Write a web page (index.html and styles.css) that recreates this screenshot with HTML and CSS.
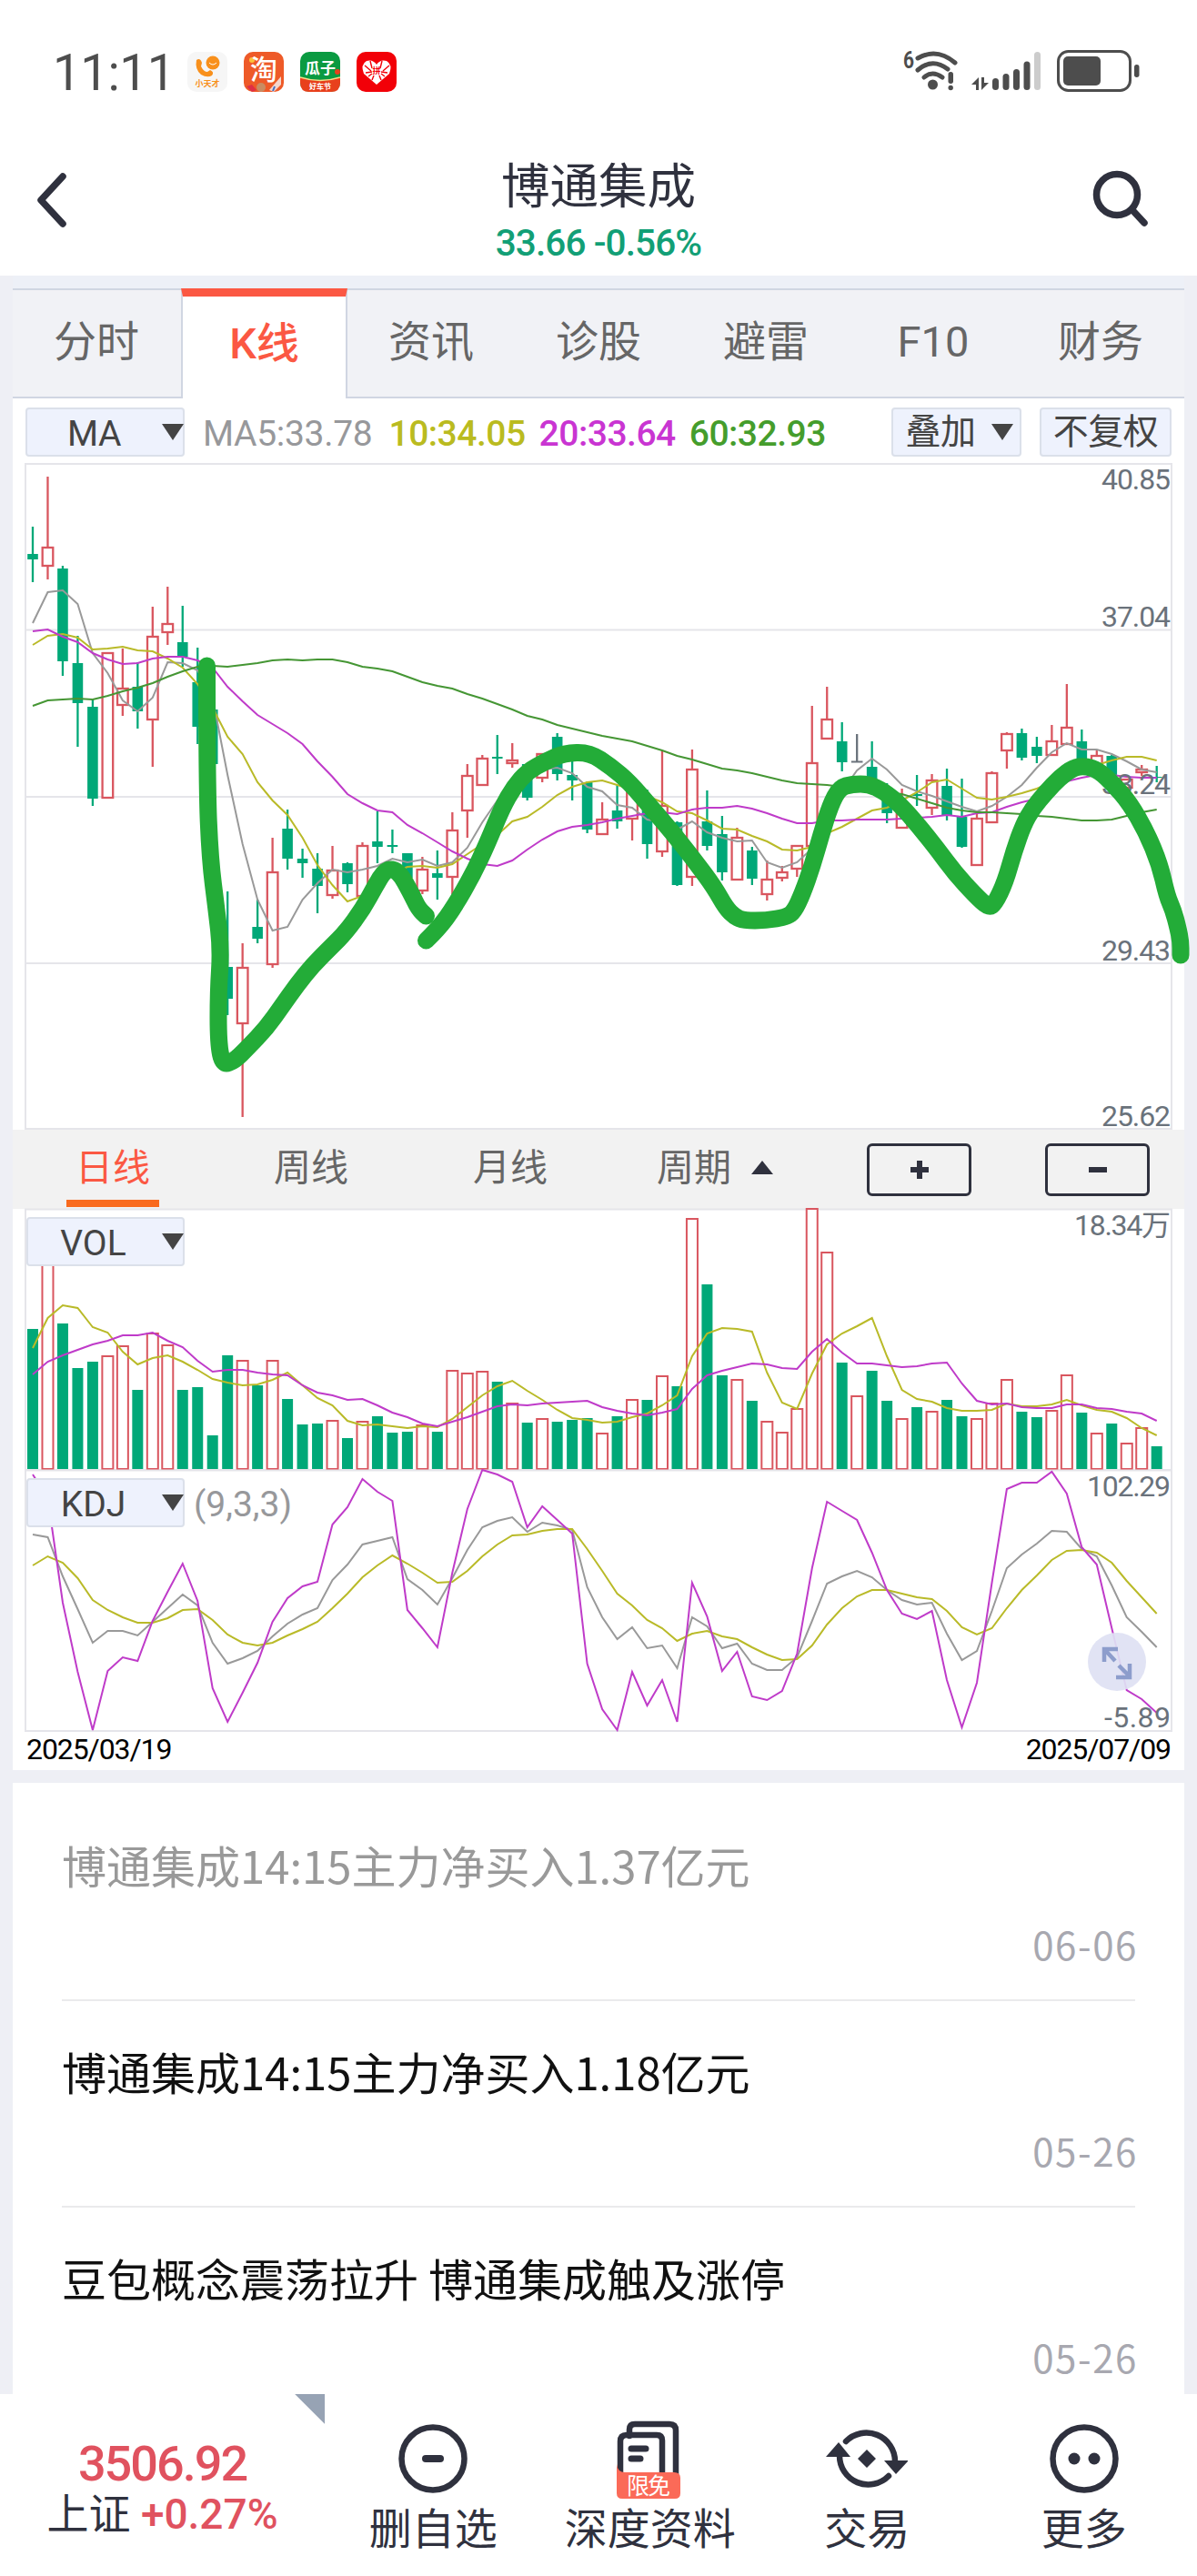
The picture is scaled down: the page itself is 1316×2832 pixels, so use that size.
FILE: index.html
```html
<!DOCTYPE html>
<html lang="zh-CN">

<head>
  <meta charset="UTF-8" />
  <meta name="viewport" content="width=device-width, initial-scale=1.0" />
  <link rel="stylesheet" href="styles.css">
  <title>博通集成</title>
</head>

<body>
  <!-- 状态栏 -->
  <div class="status">
    <span class="time">11:11</span>
    <div class="apps">
      <svg class="app" viewBox="0 0 44 44">
        <rect width="44" height="44" rx="10" fill="#f6f6f6" />
        <path d="M10 9q4-3 6 3l-1 4q3 6 7 6l3-2q5 2 2 6-5 3-12-1-7-6-5-16z" fill="#f8901c" />
        <circle cx="28" cy="12" r="7.500" fill="#f8901c" />
        <path d="M24 12q4 4 8 0" fill="none" stroke="#fff" stroke-width="1" />
        <text x="22" y="38" font-size="9" fill="#f8901c" text-anchor="middle" font-weight="700">小天才</text>
      </svg>
      <svg class="app" viewBox="0 0 44 44">
        <rect width="44" height="44" rx="10" fill="#ee5a28" />
        <circle cx="9" cy="9" r="3" fill="#fdc13a" />
        <text x="22" y="30" font-size="30" fill="#fff" text-anchor="middle" font-weight="500">淘</text>
        <path d="M3 38l6-2 5 6-5 2z" fill="#e02f45" />
        <circle cx="19" cy="39" r="5" fill="#c98b62" />
        <path d="M28 42l13-15v9l-8 8z" fill="#f4d6cc" />
        <path d="M32 43l2-5" stroke="#3f6fc4" stroke-width="2" />
      </svg>
      <svg class="app" viewBox="0 0 44 44">
        <rect width="44" height="44" rx="10" fill="#0a9a41" />
        <path d="M0 28q22 7 44 0v6q0 10-10 10H10Q0 44 0 34z" fill="#e8401c" />
        <path d="M0 28q22 7 44 0" fill="none" stroke="#f5e08a" stroke-width="1.500" />
        <circle cx="41" cy="22" r="3" fill="#e8401c" />
        <text x="22" y="24" font-size="17" fill="#fff" text-anchor="middle" font-weight="700">瓜子</text>
        <text x="22" y="41" font-size="8" fill="#fff" text-anchor="middle" font-weight="700">好车节</text>
      </svg>
      <svg class="app" viewBox="0 0 44 44">
        <rect width="44" height="44" rx="10" fill="#f20008" />
        <path d="M22 36L8 24Q4 14 11 10q7-2 11 4 4-6 11-4 7 4 3 14z" fill="#fff" />
        <path d="M9 15l7 6M15 10l2 8M28 10l-2 8M36 15l-7 6M10 23l7-1M34 23l-7-1M17 31l2-5M27 31l-2-5M13 27l4-3M31 27l-4-3" stroke="#f20008" stroke-width="1.400" />
        <text x="22" y="24" font-size="9" fill="#f20008" text-anchor="middle" font-weight="700">拼</text>
      </svg>
    </div>
    <svg class="signals" viewBox="990 50 270 56">
      <text x="993" y="75" font-size="25" textLength="12" lengthAdjust="spacingAndGlyphs" font-weight="700" fill="#4d4d4d">6</text>
      <g fill="none" stroke="#4d4d4d" stroke-width="5">
        <path d="M1009 64Q1030 52 1050 69" stroke-linecap="round" />
        <path d="M1009 77Q1025 63 1042 76" stroke-linecap="round" />
        <path d="M1016 85Q1025 77 1036 85" stroke-linecap="round" />
      </g>
      <circle cx="1025.500" cy="93" r="5.500" fill="#4d4d4d" />
      <rect x="1042.500" y="79" width="5.500" height="13" rx="2.700" fill="#4d4d4d" />
      <circle cx="1045.200" cy="96.500" r="2.700" fill="#4d4d4d" />
      <path d="M1076 99V85l-8 8h5v6zM1079 85v14l8-8h-5v-6z" fill="#4d4d4d" />
      <g fill="#4d4d4d">
        <rect x="1091" y="86" width="7" height="13" rx="3.500" />
        <rect x="1102.500" y="81" width="7" height="18" rx="3.500" />
        <rect x="1114" y="76" width="7" height="23" rx="3.500" />
        <rect x="1125.500" y="67.500" width="7" height="31.500" rx="3.500" />
        <rect x="1137" y="57" width="7" height="42" rx="3.500" fill="#ccc" />
        <rect x="1169" y="62" width="41" height="32" rx="5" />
        <rect x="1247" y="71" width="5.500" height="14" rx="2.700" />
      </g>
      <rect x="1163.500" y="56.500" width="79" height="43" rx="11" fill="none" stroke="#4d4d4d" stroke-width="3" />
    </svg>
  </div>

  <!-- 标题栏 -->
  <header class="header">
    <svg class="back" viewBox="0 0 40 66"><path d="M32 7L8 33l24 26" /></svg>
    <div class="stock">
      <h1>博通集成</h1>
      <p>33.66 -0.56%</p>
    </div>
    <svg class="search" viewBox="0 0 66 66"><circle cx="28" cy="27" r="22.500" /><path d="M45 44l13 14" /></svg>
  </header>

  <main class="panel">
    <nav class="tabs">
      <a>分时</a>
      <a class="active">K线</a>
      <a>资讯</a>
      <a>诊股</a>
      <a>避雷</a>
      <a>F10</a>
      <a>财务</a>
    </nav>

    <div class="legend">
      <div class="select">MA<i class="down"></i></div>
      <span class="ma5">MA5:33.78</span>
      <span class="ma10">10:34.05</span>
      <span class="ma20">20:33.64</span>
      <span class="ma60">60:32.93</span>
      <div class="select overlap">叠加<i class="down"></i></div>
      <div class="select right">不复权</div>
    </div>

    <svg class="chart kline" viewBox="0 502 1288 740">
      <path class="grid" d="M14 510H1274V1241H14zM14 692.500H1274M14 876H1274M14 1059H1274" />
      <g id="candles"></g>
      <g class="axis">
        <text x="1273" y="538" textLength="76">40.85</text>
        <text x="1273" y="689" textLength="76">37.04</text>
        <text x="1273" y="872.500" textLength="76">33.24</text>
        <text x="1273" y="1055.500" textLength="76">29.43</text>
        <text x="1273" y="1238" textLength="76">25.62</text>
      </g>
      <!-- 手绘走势 -->
      <g class="brush" id="brush"></g>
    </svg>

    <div class="periods">
      <a class="active">日线</a>
      <a>周线</a>
      <a>月线</a>
      <a>周期<i class="up"></i></a>
      <button><svg viewBox="0 0 24 24"><path d="M2 12h20M12 2v20" /></svg></button>
      <button><svg viewBox="0 0 24 24"><path d="M2 12h20" /></svg></button>
    </div>

    <div class="indicator">
      <svg class="chart" viewBox="0 1329 1288 287">
        <path class="grid" d="M14 1616V1329.500H1274V1616z" />
        <g id="volume"></g>
        <g class="axis"><text x="1273" y="1358" textLength="106">18.34万</text></g>
      </svg>
      <div class="select">VOL<i class="down"></i></div>
    </div>

    <div class="indicator">
      <svg class="chart" viewBox="0 1616 1288 288">
        <path class="grid" d="M14 1616.500H1274V1903H14z" />
        <g id="kdj"></g>
        <g class="axis">
          <text x="1273" y="1645" textLength="92">102.29</text>
          <text x="1273" y="1899" textLength="73">-5.89</text>
        </g>
      </svg>
      <div class="select">KDJ<i class="down"></i></div>
      <span class="params">(9,3,3)</span>
      <svg class="expand" viewBox="0 0 64 64">
        <circle cx="32" cy="32" r="32" />
        <path d="M18 32V18H33M18 18L30 31M46 34V49H31M46 48L34 36" />
      </svg>
    </div>

    <div class="dates"><span>2025/03/19</span><span>2025/07/09</span></div>
  </main>

  <section class="news">
    <article class="read">
      <h2>博通集成14:15主力净买入1.37亿元</h2>
      <time>06-06</time>
    </article>
    <article>
      <h2>博通集成14:15主力净买入1.18亿元</h2>
      <time>05-26</time>
    </article>
    <article>
      <h2>豆包概念震荡拉升 博通集成触及涨停</h2>
      <time>05-26</time>
    </article>
  </section>

  <footer class="toolbar">
    <div class="index">
      <strong>3506.92</strong>
      <p>上证 <em>+0.27%</em></p>
    </div>
    <a>
      <svg viewBox="0 0 90 90"><circle cx="45" cy="45" r="34.500" /><path d="M37 45h16" stroke-width="8" /></svg>
      删自选
    </a>
    <a>
      <svg viewBox="0 0 90 90">
        <path d="M22 20V13q0-6 6-6H66q7 0 7 7V62" />
        <path d="M12 62V26q0-7 7-7H52q6 0 6 6V62" />
        <path d="M24 34H40M24 45H34" stroke-width="7" />
        <path class="tag" d="M8 51q1 9 9 9H71q7 0 7 6V83q0 6-6 6H14q-6 0-6-6z" />
        <text x="43" y="84" textLength="48">限免</text>
      </svg>
      深度资料
    </a>
    <a>
      <svg viewBox="0 0 90 90">
        <path d="M22 26A31.500 31.500 0 0 1 76 48M69 64A31.500 31.500 0 0 1 15 42" />
        <path class="fill" d="M0 43L14 27 27 43zM64 47H91L77 62zM45 35l10 10-10 10-10-10z" />
      </svg>
      交易
    </a>
    <a>
      <svg viewBox="0 0 90 90"><circle cx="45" cy="45" r="34.500" /><circle class="fill" cx="34" cy="45" r="6.500" /><circle class="fill" cx="56" cy="45" r="6.500" /></svg>
      更多
    </a>
  </footer>

  <script>
    const STEP = 16.476
    const xAt = i => 22 + i * STEP

    // 每根K线: 颜色, 最高, 实体上沿, 实体下沿, 最低
    const candles = [
      'g 579 609 615 640', 'r 524 602 622 637', 'g 622 625 727 743', 'g 699 729 773 821', 'g 768 777 878 886',
      'r 718 718 877 877', 'r 713 757 775 787', 'g 728 755 782 801', 'r 667 700 791 843', 'r 645 686 695 709',
      'g 666 706 722 733', 'g 712 750 799 818', 'g 760 780 840 850', 'g 980 1063 1098 1116', 'r 1037 1064 1125 1228',
      'g 989 1019 1032 1037', 'r 921 959 1060 1064', 'g 890 911 944 956', 'g 933 944 949 965', 'g 938 955 974 1004',
      'r 930 957 984 988', 'g 948 949 972 981', 'r 926 930 985 985', 'g 892 925 931 949', 'g 912 929 931 938',
      'g 938 938 965 970', 'r 942 956 979 983', 'g 935 960 965 989', 'r 893 913 964 983', 'r 840 853 891 921',
      'r 830 834 863 863', 'g 808 832 834 851', 'r 817 836 839 844', 'g 839 840 877 880', 'r 829 829 855 860',
      'g 806 810 851 858', 'g 833 852 858 880', 'g 859 860 912 916', 'r 882 901 917 918', 'g 863 891 903 911',
      'r 866 868 900 924', 'g 868 887 928 944', 'r 825 886 936 942', 'g 903 904 973 974', 'r 824 846 964 974',
      'g 869 903 930 935', 'g 897 917 959 968', 'r 910 921 967 967', 'g 931 935 966 973', 'r 946 967 983 990',
      'r 952 959 965 969', 'r 929 930 955 964', 'r 776 839 930 930', 'r 755 791 812 812', 'g 794 815 838 848',
      'f 807 837 838 838', 'g 815 843 860 865', 'g 861 877 894 905', 'r 867 887 910 910', 'g 852 873 875 886',
      'r 851 858 888 896', 'g 845 864 896 902', 'g 856 898 931 932', 'r 894 900 951 951', 'r 848 850 904 904',
      'r 805 807 825 845', 'g 801 806 833 836', 'g 810 821 831 839', 'r 797 815 830 830', 'r 752 800 818 818',
      'g 802 815 840 842', 'r 825 831 843 843', 'g 830 831 857 857', 'r 857 857 866 866', 'r 841 846 849 853',
      'g 842 854 855 860'
    ].map(row => row.split(' ').map((v, i) => i ? +v : v))

    const volumes = [154, 268, 160, 111, 118, 124, 135, 87, 149, 136, 87, 90, 37, 125, 119, 92, 119, 77, 49, 50, 53, 34, 52, 58, 40, 41, 48, 41, 108, 105, 107, 96, 72, 51, 55, 52, 54, 56, 39, 58, 76, 76, 102, 91, 275, 203, 103, 98, 75, 52, 40, 66, 286, 238, 117, 80, 108, 75, 55, 68, 63, 76, 58, 55, 72, 98, 63, 57, 64, 103, 62, 39, 50, 28, 45, 25]

    const ma = {
      ma5: [685, 651, 649, 664, 718, 740, 770, 782, 767, 728, 729, 737, 767, 852, 928, 989, 1023, 1019, 989, 971, 956, 959, 956, 952, 944, 948, 945, 952, 948, 932, 904, 880, 860, 850, 846, 844, 850, 865, 870, 885, 888, 901, 904, 912, 903, 915, 921, 925, 924, 948, 954, 948, 933, 900, 870, 847, 834, 846, 863, 870, 875, 881, 887, 892, 886, 876, 863, 844, 827, 817, 824, 824, 829, 837, 846, 849],
      ma10: [709, 699, 697, 701, 714, 713, 711, 715, 716, 724, 734, 752, 778, 810, 829, 860, 880, 896, 921, 951, 973, 991, 985, 970, 960, 953, 952, 954, 950, 939, 928, 918, 903, 898, 887, 874, 865, 860, 858, 863, 868, 875, 882, 892, 894, 902, 911, 912, 919, 925, 934, 935, 931, 916, 909, 900, 891, 888, 880, 871, 860, 857, 867, 877, 879, 876, 872, 867, 860, 854, 847, 841, 836, 832, 832, 836],
      ma20: [694, 692, 700, 706, 718, 725, 730, 729, 724, 722, 722, 726, 734, 755, 771, 786, 796, 806, 818, 837, 854, 873, 883, 891, 893, 907, 916, 926, 936, 944, 950, 952, 946, 934, 923, 914, 909, 907, 904, 900, 897, 894, 893, 895, 890, 888, 888, 886, 889, 894, 900, 905, 905, 902, 902, 901, 901, 901, 900, 899, 898, 896, 898, 894, 893, 887, 882, 878, 868, 859, 855, 852, 852, 854, 855, 855],
      ma60: [776, 770, 769, 768, 769, 765, 760, 756, 751, 744, 738, 733, 732, 733, 731, 729, 726, 725, 726, 725, 725, 728, 733, 735, 738, 744, 750, 754, 757, 763, 768, 774, 780, 787, 791, 797, 801, 805, 809, 812, 815, 820, 825, 831, 835, 840, 845, 847, 850, 854, 858, 861, 862, 863, 865, 867, 868, 871, 873, 878, 883, 888, 891, 893, 893, 894, 895, 897, 898, 900, 902, 902, 901, 897, 893, 890]
    }

    const volMa = {
      ma10: [1482, 1449, 1435, 1438, 1459, 1465, 1486, 1500, 1493, 1490, 1497, 1506, 1516, 1520, 1523, 1522, 1517, 1509, 1523, 1537, 1545, 1562, 1567, 1566, 1568, 1570, 1568, 1569, 1560, 1547, 1534, 1524, 1518, 1529, 1539, 1550, 1559, 1561, 1564, 1563, 1558, 1554, 1545, 1534, 1491, 1466, 1460, 1461, 1464, 1509, 1542, 1549, 1510, 1478, 1466, 1458, 1449, 1491, 1528, 1538, 1541, 1548, 1551, 1551, 1550, 1543, 1546, 1546, 1544, 1539, 1545, 1550, 1552, 1559, 1570, 1578],
      ma20: [1511, 1497, 1490, 1484, 1478, 1474, 1468, 1468, 1465, 1474, 1481, 1496, 1508, 1506, 1506, 1509, 1511, 1512, 1523, 1531, 1534, 1539, 1538, 1545, 1553, 1558, 1565, 1568, 1563, 1558, 1552, 1546, 1544, 1545, 1543, 1542, 1541, 1540, 1547, 1551, 1554, 1556, 1553, 1549, 1527, 1512, 1507, 1503, 1499, 1500, 1504, 1505, 1486, 1472, 1487, 1499, 1499, 1501, 1503, 1502, 1499, 1498, 1521, 1540, 1544, 1543, 1547, 1548, 1548, 1544, 1544, 1548, 1549, 1552, 1554, 1562]
    }

    // K 灰, D 黄, J 紫
    const kdj = {
      ma5: [1687, 1690, 1733, 1769, 1806, 1793, 1793, 1798, 1783, 1768, 1753, 1765, 1806, 1829, 1823, 1815, 1799, 1785, 1775, 1768, 1737, 1720, 1698, 1694, 1690, 1736, 1748, 1764, 1735, 1704, 1679, 1672, 1668, 1684, 1674, 1677, 1682, 1745, 1778, 1802, 1789, 1812, 1809, 1834, 1778, 1788, 1812, 1807, 1829, 1836, 1836, 1822, 1782, 1741, 1733, 1727, 1734, 1748, 1759, 1764, 1762, 1796, 1825, 1815, 1771, 1724, 1709, 1697, 1683, 1684, 1703, 1711, 1743, 1778, 1794, 1811],
      ma10: [1721, 1711, 1718, 1735, 1759, 1770, 1778, 1784, 1784, 1779, 1770, 1769, 1781, 1797, 1806, 1809, 1806, 1798, 1791, 1783, 1768, 1752, 1734, 1721, 1710, 1719, 1729, 1740, 1739, 1727, 1711, 1698, 1688, 1687, 1683, 1681, 1681, 1703, 1727, 1752, 1765, 1781, 1790, 1804, 1796, 1793, 1799, 1802, 1811, 1819, 1825, 1824, 1809, 1786, 1768, 1755, 1748, 1748, 1752, 1756, 1758, 1771, 1789, 1797, 1790, 1768, 1748, 1732, 1715, 1705, 1704, 1707, 1718, 1738, 1756, 1774],
      ma20: [1621, 1647, 1762, 1838, 1902, 1837, 1822, 1826, 1782, 1750, 1719, 1760, 1856, 1893, 1861, 1828, 1783, 1757, 1744, 1739, 1676, 1657, 1626, 1640, 1650, 1770, 1790, 1811, 1729, 1659, 1616, 1621, 1629, 1679, 1656, 1671, 1686, 1829, 1879, 1902, 1838, 1875, 1847, 1893, 1740, 1777, 1837, 1816, 1865, 1869, 1859, 1818, 1724, 1651, 1661, 1671, 1707, 1748, 1774, 1780, 1771, 1847, 1899, 1850, 1740, 1637, 1630, 1630, 1618, 1642, 1701, 1720, 1790, 1858, 1868, 1883]
    }

    // 两笔手绘线
    const strokes = [
      [[213.5, 732], [213.5, 862], [217, 945], [224, 1000], [229, 1044], [226, 1090], [226, 1147], [231, 1171], [244, 1166], [258, 1152], [279, 1130], [296, 1106], [313, 1082], [330, 1061], [350, 1041], [366, 1025], [385, 999], [398, 975], [410, 955], [424, 957], [438, 982], [446, 999], [454.5, 1007]],
      [[454.5, 1034], [469, 1020], [486, 996], [506, 961], [521, 929], [538, 888], [551, 865], [566, 848], [586, 837], [606, 828], [634, 827], [658, 843], [678, 860], [702, 888], [726, 916], [751, 948], [771, 975], [784, 998], [794, 1008], [804, 1012], [828, 1012], [851, 1008], [859, 1002], [868, 983], [879, 952], [889, 917], [899, 885], [909, 866], [923, 862], [941, 862], [958, 870], [976, 885], [996, 908], [1016, 933], [1036, 960], [1058, 984], [1073, 998], [1080, 993], [1091, 970], [1101, 935], [1111, 907], [1121, 889], [1136, 871], [1151, 855], [1166, 844], [1179, 842], [1194, 847], [1211, 863], [1228, 883], [1246, 914], [1261, 950], [1269, 985], [1276, 1001], [1281, 1020], [1284, 1035], [1284, 1050]]
    ]

    const line = (cls, ys) => `<polyline class="${cls}" points="${ys.map((y, i) => xAt(i).toFixed(1) + ',' + y).join(' ')}" />`
    const lines = set => Object.keys(set).map(k => line(k, set[k])).join('')

    function drawCandle([color, high, top, bottom, low], i) {
      const x = xAt(i)
      const height = Math.max(bottom - top, 1)
      return `<g class="${color}"><path d="M${x} ${high}V${top}M${x} ${bottom}V${low}" />
        <rect x="${x - 5.8}" y="${top}" width="11.6" height="${height}" /></g>`
    }

    function drawVolume(height, i) {
      const color = candles[i][0] === 'g' ? 'g' : 'r'
      return `<g class="${color} vol"><rect x="${xAt(i) - 6}" y="${1615 - height}" width="12" height="${height}" /></g>`
    }

    // 用中点做控制，把折线画得圆滑
    function smooth(points) {
      let d = `M${points[0]}`
      for (let i = 1; i < points.length - 1; i++) {
        const [x, y] = points[i]
        const [nx, ny] = points[i + 1]
        d += `Q${x} ${y} ${(x + nx) / 2} ${(y + ny) / 2}`
      }
      return d + `L${points[points.length - 1]}`
    }

    document.getElementById('candles').innerHTML = candles.map(drawCandle).join('') + lines(ma)
    document.getElementById('volume').innerHTML = volumes.map(drawVolume).join('') + lines(volMa)
    document.getElementById('kdj').innerHTML = lines(kdj)
    document.getElementById('brush').innerHTML = strokes.map(s => `<path d="${smooth(s)}" />`).join('')
  </script>
</body>

</html>
```
FILE: styles.css
```css
:root {
  --ink: #2f313e;
  --red: #d9565f;
  --green: #00a878;
  --accent: #fb5843;
  --side: #eeeff5;
}

* {
  box-sizing: border-box;
}

body {
  margin: 0;
  height: 2832px;
  overflow: hidden;
  display: flex;
  flex-direction: column;
  background-color: var(--side);
  color: var(--ink);
  font-family: Roboto, "Noto Sans CJK SC", sans-serif;
}

h1,
h2,
p {
  margin: 0;
  font-weight: 400;
}

/* 状态栏 */
.status {
  height: 150px;
  padding: 50px 56px 0 58px;
  display: flex;
  background-color: #fff;
}

.time {
  width: 148px;
  font-size: 55px;
  line-height: 60px;
  letter-spacing: -0.6px;
  color: #4d4d4d;
}

.apps {
  display: flex;
  gap: 18px;
  padding-top: 7px;
}

.app {
  width: 44px;
  height: 44px;
}

.signals {
  width: 270px;
  height: 56px;
  margin-left: auto;
}

/* 标题栏 */
.header {
  height: 153px;
  padding: 0 50px 0 37px;
  display: flex;
  justify-content: space-between;
  background-color: #fff;
}

.header svg {
  margin-top: 37px;
  height: 66px;
  fill: none;
  stroke: var(--ink);
  stroke-width: 7.5;
  stroke-linecap: round;
  stroke-linejoin: round;
}

.back {
  width: 40px;
}

.search {
  width: 66px;
}

.stock {
  text-align: center;
  padding-left: 39px;
}

.stock h1 {
  font-size: 53.5px;
  line-height: 60px;
  margin-top: 26px;
}

.stock p {
  font-size: 40.5px;
  line-height: 48px;
  margin-top: 7px;
  font-weight: 500;
  letter-spacing: -0.9px;
  color: #129f76;
}

.panel {
  margin: 0 14px;
  padding-top: 14px;
  background: linear-gradient(#edf0f7 14px, #fff 14px);
}

/* 顶部标签 */
.tabs {
  height: 121px;
  display: flex;
  background-color: #f1f2f6;
  border-top: 2px solid #d0d6e2;
  border-bottom: 2px solid #d0d6e2;
}

.tabs a {
  width: 184px;
  font-size: 47px;
  line-height: 113px;
  text-align: center;
  color: #666;
}

.tabs a.active {
  margin: -2px 0 -2px 1px;
  width: 183px;
  line-height: 104px;
  color: var(--accent);
  background-color: #fff;
  border: solid #d0d6e2;
  border-width: 0 2px;
  border-top: 9px solid var(--accent);
  font-weight: 500;
}

/* 均线图例 */
.legend {
  height: 64px;
  padding: 10px 14px 0;
  display: flex;
  font-size: 39px;
  line-height: 59px;
  letter-spacing: -0.5px;
}

.legend span {
  margin-right: 15px;
  font-weight: 500;
}

.legend .ma5 {
  margin: 0 18px 0 20px;
  font-weight: 400;
  letter-spacing: -0.3px;
  color: #97989b;
}

.legend .ma10 {
  color: #babb20;
}

.legend .ma20 {
  color: #c935d2;
}

.legend .ma60 {
  color: #459d2c;
}

.select {
  position: relative;
  width: 175px;
  height: 54px;
  padding-right: 24px;
  border: 2px solid #dbe0ea;
  border-radius: 4px;
  background-color: #eef2fd;
  color: #444;
  font-size: 39px;
  line-height: 55px;
  text-align: center;
}

.select.overlap {
  width: 143px;
  margin-left: auto;
  padding: 0 35px 0 0;
  line-height: 51px;
}

.select.right {
  width: 145px;
  margin-left: 20px;
  padding: 0;
  line-height: 51px;
}

.down {
  position: absolute;
  right: -1px;
  top: 16px;
  border: 12px solid transparent;
  border-top: 18px solid #444;
  border-bottom: 0;
}

.overlap .down {
  right: 7px;
}

/* 图表 */
.chart {
  display: block;
  width: 1288px;
  overflow: visible;
}

.kline {
  position: relative;
  z-index: 1;
  height: 740px;
}

.grid {
  fill: none;
  stroke: #e5e5ea;
  stroke-width: 2;
}

.axis text {
  font-size: 32px;
  text-anchor: end;
  fill: #6a727b;
}

.chart polyline {
  fill: none;
  stroke-width: 2;
}

.chart .ma5 {
  stroke: #999;
}

.chart .ma10 {
  stroke: #b9ba28;
}

.chart .ma20 {
  stroke: #bf3bc9;
}

.chart .ma60 {
  stroke: #459634;
}

.chart .g {
  fill: var(--green);
  stroke: var(--green);
}

.chart .f {
  fill: #6a727b;
  stroke: #6a727b;
}

.chart .r {
  fill: #fff;
  stroke: var(--red);
}

.chart g path,
.chart .r rect {
  stroke-width: 2.3;
}

.chart .g rect {
  stroke: none;
}

.chart .vol.r rect {
  stroke-width: 2;
}

.chart .brush path {
  fill: none;
  stroke: #23ac38;
  stroke-width: 19;
  stroke-linecap: round;
  stroke-linejoin: round;
}

/* 周期切换 */
.periods {
  height: 87px;
  padding: 0 38px 0 59px;
  display: flex;
  background-color: #f2f2f2;
  font-size: 41px;
  line-height: 84px;
  color: #666;
}

.periods a {
  width: 102px;
  margin-right: 117px;
  text-align: center;
}

.periods a.active {
  height: 85px;
  margin-right: 116px;
  color: var(--accent);
  border-bottom: 8px solid #f96a1e;
}

.periods a:nth-child(4) {
  width: 150px;
  margin-left: -18px;
  margin-right: auto;
}

.up {
  display: inline-block;
  margin-left: 22px;
  vertical-align: 7px;
  border: 12.5px solid transparent;
  border-top: 0;
  border-bottom: 15px solid var(--ink);
}

.periods button {
  width: 115px;
  height: 58px;
  margin: 15px 0 0 81px;
  padding: 0;
  border: 3px solid var(--ink);
  border-radius: 6px;
  background: none;
}

.periods a + button {
  margin-left: 0;
}

.periods button svg {
  display: block;
  width: 24px;
  margin: auto;
  stroke: var(--ink);
  stroke-width: 6;
}

/* 副图 */
.indicator {
  position: relative;
  height: 287px;
}

.indicator .select {
  position: absolute;
  left: 15px;
  top: 9px;
  width: 174px;
  padding-right: 27px;
}

.params {
  position: absolute;
  left: 199px;
  top: 10px;
  font-size: 39px;
  line-height: 56px;
  color: #97989b;
}

.expand {
  position: absolute;
  left: 1182px;
  top: 179px;
  width: 64px;
  fill: rgba(222, 225, 243, 0.92);
}

.expand path {
  fill: none;
  stroke: #8d9dcc;
  stroke-width: 4.5;
}

.dates {
  height: 43px;
  padding: 0 15px;
  display: flex;
  justify-content: space-between;
  font-size: 32px;
  line-height: 40px;
  letter-spacing: -1.1px;
  color: #000;
}

/* 资讯列表 */
.news {
  flex: 1;
  margin: 14px 14px 0;
  padding: 13px 54px 0;
  overflow: hidden;
  background-color: #fff;
  font-family: "Noto Sans CJK SC", sans-serif;
}

.news article {
  height: 227px;
  padding-top: 40px;
  border-bottom: 2px solid #eaeaec;
}

.news h2 {
  font-size: 49px;
  line-height: 74px;
  white-space: nowrap;
  color: #111;
}

.news .read h2 {
  color: #999;
}

.news time {
  display: block;
  margin-top: 20px;
  font-size: 42px;
  line-height: 60px;
  letter-spacing: 1.6px;
  margin-right: -3px;
  text-align: right;
  color: #a8a8b0;
}

/* 底部工具栏 */
.toolbar {
  height: 200px;
  padding-right: 5px;
  display: flex;
  background-color: #fff;
}

/* 右上角的小三角 */
.index {
  width: 357px;
  text-align: center;
  padding-top: 45px;
  background: linear-gradient(225deg, #97a3b4 23px, transparent 23.5px);
}

.index strong {
  font-size: 54px;
  line-height: 64px;
  letter-spacing: -2px;
  font-weight: 500;
  color: #e0525f;
}

.index p {
  font-size: 46px;
  line-height: 46px;
}

.index em {
  font-style: normal;
  font-weight: 500;
  color: #e0525f;
}

.toolbar a {
  flex: 1;
  display: flex;
  flex-direction: column;
  align-items: center;
  padding-top: 26px;
  font-size: 47px;
  line-height: 65px;
}

.toolbar svg {
  width: 90px;
  height: 90px;
  fill: none;
  stroke: var(--ink);
  stroke-width: 6.5;
  stroke-linecap: round;
}

.toolbar .fill {
  fill: var(--ink);
  stroke: none;
}

.toolbar .tag {
  fill: #fb6a58;
  stroke: none;
}

.toolbar text {
  font-size: 25px;
  text-anchor: middle;
  fill: #fff;
  stroke: none;
}
```
